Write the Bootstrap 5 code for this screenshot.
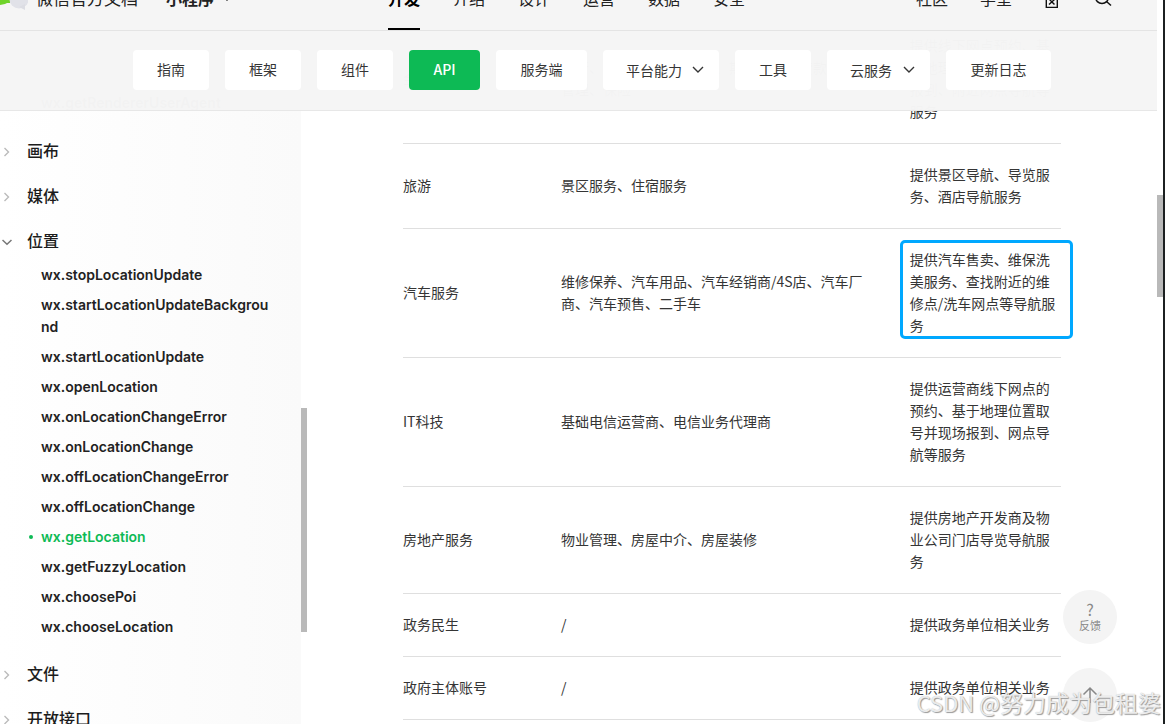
<!DOCTYPE html>
<html lang="zh-CN">
<head>
<meta charset="utf-8">
<meta name="viewport" content="width=device-width, initial-scale=1">
<title>wx.getLocation | 微信官方文档</title>
<link href="https://cdn.jsdelivr.net/npm/bootstrap@5.3.0/dist/css/bootstrap.min.css" rel="stylesheet">
<style>
body{font-family:"Noto Sans CJK SC",sans-serif;font-size:14px;line-height:22px;color:#353535;background:#fff}
a{color:inherit;text-decoration:none}
svg{display:block;flex:none}
.head-wrap{background:rgba(245,245,245,.99);border-bottom:1px solid #e7e7e7;z-index:5}
.topbar{height:31px;border-bottom:1px solid #e4e4e4}
.topbar-in{height:64px;font-size:16px;color:#222}
.brand-side{width:388px}
.brand-name{font-size:17px}
.topnav{gap:33px}
.topnav a{height:64px;line-height:64px}
.topnav a.on{font-weight:700;color:#000;border-bottom:2px solid #000}
.tools{gap:32px;padding-right:45px}
.tools svg{width:18px}
.subnav{gap:16px;padding:19px 20px 20px 133px}
.tab{--bs-btn-border-width:0;--bs-btn-border-radius:4px;--bs-btn-font-size:14px;height:40px;padding:0 15px;line-height:38px;min-width:76px;white-space:nowrap;color:#353535;background:#fff}
.tab.on{background:#0dba55;color:#fff;min-width:71px;font-weight:500}
.w-three{min-width:91px}.w-four{min-width:105px}
.drop{display:flex;align-items:center;gap:8px;padding-left:23px;line-height:22px;padding-bottom:1px}
.drop svg{margin-left:auto}
.drop-three{min-width:103px}.drop-four{min-width:116px}
.side{width:301px;padding-top:88px;background:linear-gradient(90deg,#fff,#fafafa)}
.group-name{display:flex;align-items:center;margin-top:21px;height:24px;padding:0 0 2px 2px;gap:15px;font-size:16px;font-weight:500;color:#1c1c1c}
.group-name svg{margin-top:3px}
.apis{padding-left:41px;padding-right:28px;font-family:Inter,"Noto Sans CJK SC",sans-serif;font-weight:600;color:#222;word-break:break-all}
.apis li{padding:4px 0}
.apis-open{padding-top:7px}
.apis-open + .group-name{margin-top:20px}
.apis .on{color:#0dba55;position:relative}
.apis .on::before{content:"";position:absolute;left:-12px;top:13px;width:4px;height:4px;border-radius:50%;background:#0dba55}
.rail{width:6px}
.thumb{background:#b9b9b9}
.side-thumb{margin-top:408px;height:31vh}
.page-thumb{margin-top:27vh;height:14vh}
.edge{width:2px;background:#1c2021}
.doc{padding:15px 96px 0 96px}
.cats{width:100%;table-layout:fixed}
.cats td{padding:19px 0 21px;border-bottom:1px solid #dfdfdf;vertical-align:middle}
.cats td:nth-child(2){padding-right:24px}
.c-one{width:24%}.c-two{width:53%}
.frame{position:absolute;inset:-8px -12px -3px -10px;border:3px solid #00a8ff;border-radius:5px}
.floats{right:48px;bottom:2px;gap:24px;z-index:3}
.round{width:54px;height:54px;border:0;border-radius:50%;background:#f4f4f4;color:#888;font-size:11px;line-height:16px}
.round b{font-size:16px;font-weight:400}
.stamp{right:4px;bottom:5px;z-index:4;font-size:23px;line-height:34px;color:rgba(255,255,255,.8);text-shadow:1px 1px 1px #999,0 0 1px #aaa}
.stamp span{font-size:22px}
</style>
<script src="https://cdn.jsdelivr.net/npm/bootstrap@5.3.0/dist/js/bootstrap.bundle.min.js"></script>
</head>
<body>
<div class="d-flex vh-100 overflow-hidden position-relative">
  <div class="flex-fill position-relative">
    <header class="head-wrap position-absolute top-0 start-0 w-100">
      <div class="topbar d-flex align-items-end overflow-hidden">
        <div class="topbar-in d-flex align-items-center w-100 flex-shrink-0">
          <div class="brand-side d-flex align-items-center">
            <svg width="28" height="28" viewBox="0 0 28 28" class="me-2"><path d="M0 3h10v16H7l-2 1-5 1z" fill="#6fd32a"/><ellipse cx="19" cy="15.500" rx="9.500" ry="9" fill="#e1e2e8"/><path d="M19 23l6 3v-6z" fill="#dcdde3"/><circle cx="15.500" cy="14.500" r="1.400" fill="#8d8f99"/><circle cx="22" cy="14.500" r="1.400" fill="#8d8f99"/></svg>
            <a href="#" class="brand-name">微信官方文档</a>
            <a href="#" class="ms-4 ps-1 fw-bold d-flex align-items-center gap-2">小程序 <svg width="10" height="7" viewBox="0 0 10 7"><path d="M1 1l4 4 4-4" fill="none" stroke="#222" stroke-width="1.500"/></svg></a>
          </div>
          <nav class="topnav d-flex"><a href="#" class="on">开发</a><a href="#">介绍</a><a href="#">设计</a><a href="#">运营</a><a href="#">数据</a><a href="#">安全</a></nav>
          <div class="tools d-flex align-items-center ms-auto">
            <a href="#">社区</a><a href="#">学堂</a>
            <a href="#" aria-label="语言"><svg width="18" height="20" viewBox="0 0 18 20" fill="none" stroke="#111" stroke-width="1.400"><path d="M2.300 1.500h11v18h-11zM8 8v3M4.500 11h7M5.500 11.500l5 5M10.500 11.500L5 16.500"/></svg></a>
            <a href="#" aria-label="搜索"><svg width="18" height="20" viewBox="0 0 18 20" fill="none" stroke="#111" stroke-width="1.500"><circle cx="8" cy="9" r="6.500"/><path d="M12.500 13.500l4.500 4"/></svg></a>
          </div>
        </div>
      </div>
      <nav class="subnav d-flex">
        <a href="#" class="btn tab">指南</a><a href="#" class="btn tab">框架</a><a href="#" class="btn tab">组件</a><a href="#" class="btn tab on">API</a><a href="#" class="btn tab w-three">服务端</a>
        <button type="button" class="btn tab drop drop-four">平台能力 <svg width="12" height="8" viewBox="0 0 12 8"><path d="M1 1l5 5 5-5" fill="none" stroke="#353535" stroke-width="1.400"/></svg></button>
        <a href="#" class="btn tab">工具</a>
        <button type="button" class="btn tab drop drop-three">云服务 <svg width="12" height="8" viewBox="0 0 12 8"><path d="M1 1l5 5 5-5" fill="none" stroke="#353535" stroke-width="1.400"/></svg></button>
        <a href="#" class="btn tab w-four">更新日志</a>
      </nav>
    </header>
    <div class="d-flex h-100">
      <aside class="side flex-shrink-0">
        <ul class="apis list-unstyled mb-0"><li><a href="#">wx.getRendererUserAgent</a></li></ul>
        <a href="#" class="group-name"><svg width="10" height="10" viewBox="0 0 10 10"><path d="M2.500 1l4 4-4 4" fill="none" stroke="#bbb" stroke-width="1.400"/></svg>画布</a>
        <a href="#" class="group-name"><svg width="10" height="10" viewBox="0 0 10 10"><path d="M2.500 1l4 4-4 4" fill="none" stroke="#bbb" stroke-width="1.400"/></svg>媒体</a>
        <a href="#" class="group-name"><svg width="10" height="10" viewBox="0 0 10 10"><path d="M.500 3L5 7.300 9.500 3" fill="none" stroke="#777" stroke-width="1.500"/></svg>位置</a>
        <ul class="apis apis-open list-unstyled mb-0">
          <li><a href="#">wx.stopLocationUpdate</a></li>
          <li><a href="#">wx.startLocationUpdateBackground</a></li>
          <li><a href="#">wx.startLocationUpdate</a></li>
          <li><a href="#">wx.openLocation</a></li>
          <li><a href="#">wx.onLocationChangeError</a></li>
          <li><a href="#">wx.onLocationChange</a></li>
          <li><a href="#">wx.offLocationChangeError</a></li>
          <li><a href="#">wx.offLocationChange</a></li>
          <li class="on"><a href="#">wx.getLocation</a></li>
          <li><a href="#">wx.getFuzzyLocation</a></li>
          <li><a href="#">wx.choosePoi</a></li>
          <li><a href="#">wx.chooseLocation</a></li>
        </ul>
        <a href="#" class="group-name"><svg width="10" height="10" viewBox="0 0 10 10"><path d="M2.500 1l4 4-4 4" fill="none" stroke="#bbb" stroke-width="1.400"/></svg>文件</a>
        <a href="#" class="group-name"><svg width="10" height="10" viewBox="0 0 10 10"><path d="M2.500 1l4 4-4 4" fill="none" stroke="#bbb" stroke-width="1.400"/></svg>开放接口</a>
      </aside>
      <div class="rail flex-shrink-0"><div class="thumb side-thumb"></div></div>
      <main class="doc flex-fill">
        <table class="cats">
          <colgroup><col class="c-one"><col class="c-two"><col></colgroup>
          <tbody>
            <tr><td>金融业</td><td>银行、信托、基金、证券、期货、小额贷款、担保/管理、保险</td><td>提供线下网点预约、基于地理位置取号并现场报到、附近网点导航等服务</td></tr>
            <tr><td>旅游</td><td>景区服务、住宿服务</td><td>提供景区导航、导览服务、酒店导航服务</td></tr>
            <tr><td>汽车服务</td><td>维修保养、汽车用品、汽车经销商/4S店、汽车厂商、汽车预售、二手车</td><td><div class="position-relative">提供汽车售卖、维保洗美服务、查找附近的维修点/洗车网点等导航服务<span class="frame"></span></div></td></tr>
            <tr><td>IT科技</td><td>基础电信运营商、电信业务代理商</td><td>提供运营商线下网点的预约、基于地理位置取号并现场报到、网点导航等服务</td></tr>
            <tr><td>房地产服务</td><td>物业管理、房屋中介、房屋装修</td><td>提供房地产开发商及物业公司门店导览导航服务</td></tr>
            <tr><td>政务民生</td><td>/</td><td>提供政务单位相关业务</td></tr>
            <tr><td>政府主体账号</td><td>/</td><td>提供政务单位相关业务</td></tr>
          </tbody>
        </table>
      </main>
    </div>
  </div>
  <div class="rail flex-shrink-0"><div class="thumb page-thumb"></div></div>
  <div class="edge flex-shrink-0"></div>
  <div class="floats position-absolute d-flex flex-column">
    <button type="button" class="round d-flex flex-column align-items-center justify-content-center p-0"><b>?</b>反馈</button>
    <button type="button" class="round d-flex align-items-center justify-content-center p-0" aria-label="返回顶部"><svg width="18" height="18" viewBox="0 0 18 18" fill="none" stroke="#888" stroke-width="1.500"><path d="M9 17V2M2.500 8.500L9 2l6.500 6.500"/></svg></button>
  </div>
  <div class="stamp position-absolute text-nowrap"><span>CSDN @</span>努力成为包租婆</div>
</div>
</body>
</html>
